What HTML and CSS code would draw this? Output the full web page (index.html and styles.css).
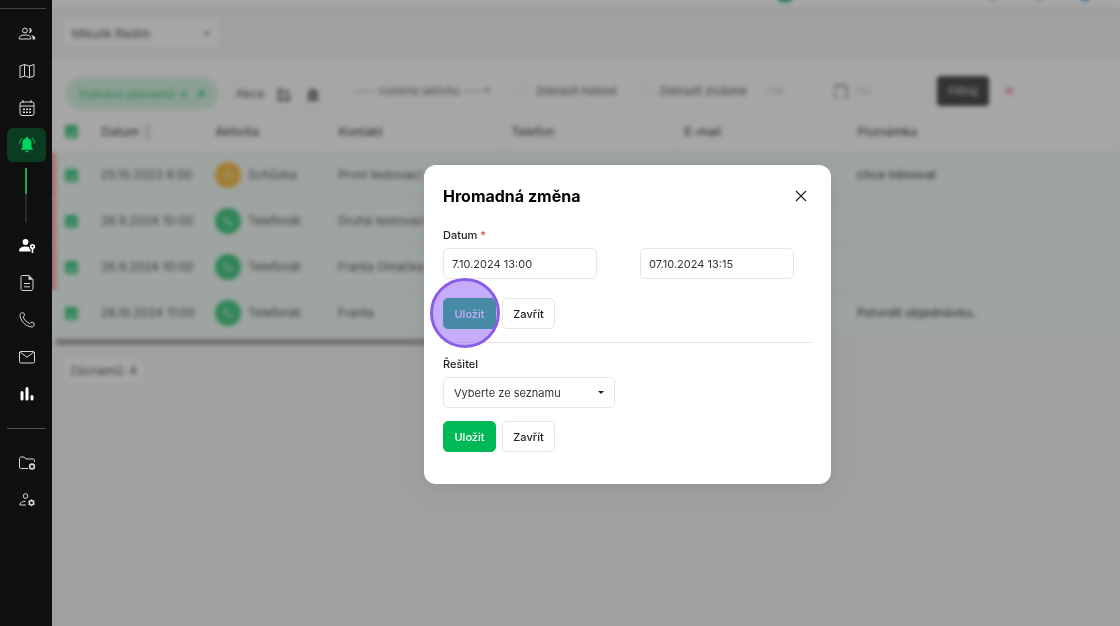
FILE: index.html
```html
<!DOCTYPE html>
<html lang="cs">
<head>
    <meta charset="UTF-8">
    <meta name="viewport" content="width=device-width, initial-scale=1.0">
    <title>Aktivity - Hromadná změna</title>
    <link rel="stylesheet" href="styles.css">
</head>
<body>
    <nav class="sidebar">
        <ul class="nav-list nav-top">
            <li><a href="#" aria-label="Kontakty">
                <svg viewBox="0 0 18 16"><circle cx="7" cy="4.5" r="2.4"/><path d="M1.2 13v-1.2c0-1.7 2.6-2.8 5.8-2.8s5.8 1.1 5.8 2.8V13z"/><path class="fill" d="M11 2c3.600-.4 3.600 5.400 0 5 1-1.600 1-3.400 0-5zM13.200 9c2.300.5 4 1.400 4 3v1.500h-2.600V12c0-1.200-.5-2.200-1.400-3z"/></svg>
            </a></li>
            <li><a href="#" aria-label="Mapa">
                <svg viewBox="0 0 18 16"><path d="M2 3l4.500-1.500 5 1.500L16 1.500V13l-4.500 1.500-5-1.500L2 14.500zM6.500 1.500V13M11.500 3v11.500"/></svg>
            </a></li>
            <li><a href="#" aria-label="Kalendář">
                <svg viewBox="0 0 18 16"><rect x="2" y="2" width="14" height="13.500" rx="2"/><path d="M5 0v3M13 0v3M2 6h14"/><path class="dots" d="M5 9.200h2M8 9.200h2M11 9.200h2M5 12.300h2M8 12.300h2M11 12.300h2"/></svg>
            </a></li>
            <li><a href="#" class="active" aria-label="Aktivity">
                <svg viewBox="0 0 18 16"><path class="fill" d="M9 0c.8 0 1.200.5 1.200 1.200C12.600 1.800 13.600 3.700 13.600 6v4.500l1.200 1.300v1H3.200v-1l1.200-1.300V6c0-2.300 1-4.200 3.400-4.800C7.800.5 8.200 0 9 0zM7.300 13.800h3.400c-.2 2.200-3.200 2.200-3.400 0z"/><path d="M1.500 6.500C1.500 4 2.500 2.200 4 1M16.500 6.500C16.500 4 15.500 2.200 14 1"/></svg>
            </a></li>
        </ul>
        <div class="nav-progress"></div>
        <ul class="nav-list">
            <li><a href="#" class="strong" aria-label="Uživatelé">
                <svg viewBox="0 0 18 16"><circle class="fill" cx="7.500" cy="4" r="2.900"/><path class="fill" d="M1.200 13.500V12c0-2.200 3-3.600 6.300-3.600 1.500 0 2.700.3 3.600.7 0 1.500.7 2.400 1.500 3v1.400z"/><circle class="key" cx="14.500" cy="8.500" r="1.800"/><path class="key" d="M14.500 10.500v4.500"/></svg>
            </a></li>
            <li><a href="#" aria-label="Dokumenty">
                <svg viewBox="0 0 18 16"><path d="M4.500.5h6.500l4 4v9c0 1.300-.7 2-2 2H5c-1.300 0-2-.7-2-2V2c0-1 .5-1.500 1.500-1.500zM6 8.500h6M6 11.800h6"/><path class="fill" d="M10.500.5v4.300H15z"/></svg>
            </a></li>
            <li><a href="#" aria-label="Hovory">
                <svg viewBox="0 0 18 16"><path d="M2 2.500C2 1.500 3 .8 4.500.8c1.300 0 2 .8 2 2 0 1-.6 1.600-1.400 2.200 1.500 3.300 3.500 5.200 6.700 6.600.6-.9 1.200-1.400 2.200-1.400 1.300 0 2.200.8 2.200 2 0 1.700-.9 2.800-2.400 2.800C7.500 14.500 2 8.800 2 2.500z"/></svg>
            </a></li>
            <li><a href="#" aria-label="E-maily">
                <svg viewBox="0 0 18 16"><rect x="1.500" y="2.500" width="15" height="11.500" rx="1.500"/><path d="M2 3l7 5.200L16 3"/></svg>
            </a></li>
            <li><a href="#" aria-label="Statistiky">
                <svg viewBox="0 0 18 16"><path class="bars" d="M4 6.500V13M9 2.500V13M14 10.500V13"/></svg>
            </a></li>
        </ul>
        <hr>
        <ul class="nav-list">
            <li><a href="#" aria-label="Nastavení složek">
                <svg viewBox="0 0 18 16"><path d="M10 13.500H3.200c-1 0-1.700-.6-1.700-1.500V3.500C1.500 2.600 2.200 2 3.200 2h3L8 4h7c1 0 1.500.6 1.500 1.500V7"/><circle class="gear" cx="14" cy="11.500" r="2.400"/></svg>
            </a></li>
            <li><a href="#" aria-label="Nastavení uživatelů">
                <svg viewBox="0 0 18 16"><circle cx="7.500" cy="4" r="2.300"/><path d="M8 13H2v-1c0-1.500 2.500-2.600 5.500-2.600"/><circle class="gear" cx="13.500" cy="10.800" r="2.200"/><path d="M13.500 7.300v1M13.500 13.300v1M10.500 9l1 .6M16.500 9l-1 .6M10.500 12.600l1-.6M16.500 12.600l-1-.6"/></svg>
            </a></li>
        </ul>
    </nav>

    <div class="content">
        <header class="topbar">
            <span class="avatar green"></span>
            <span class="avatar gray"></span>
            <span class="avatar gray"></span>
            <span class="avatar blue"></span>
        </header>
        <div class="user-bar">
            <select class="user-select" aria-label="Uživatel"><option>Mikulík Radim</option></select>
            <span class="caret"></span>
        </div>

        <main class="panel">
            <div class="filters">
                <button class="chip" type="button">Vybráno záznamů: 4 <b>×</b></button>
                <div class="actions">
                    <button type="button">Akce</button>
                    <button type="button" aria-label="Upravit"><svg viewBox="0 0 12 12"><path d="M6 1H1v10h10V6M5 7l6-6"/></svg></button>
                    <button type="button" aria-label="Smazat"><svg viewBox="0 0 12 12"><path d="M1 3h10M4 1h4M2 3v8h8V3M5 5v4M7 5v4"/></svg></button>
                </div>
                <div class="activity">
                    <select aria-label="Aktivita"><option>---- Vyberte aktivitu ----</option></select>
                    <span class="caret"></span>
                </div>
                <label class="toggle"><input type="checkbox"> Zobrazit hotové</label>
                <label class="toggle"><input type="checkbox"> Zobrazit zrušené</label>
                <div class="range">
                    <input type="text" placeholder="Od" aria-label="Od">
                    <svg viewBox="0 0 14 14"><path d="M1 5V2h12v11H9M1 8v5h3M4 0v3M10 0v3"/></svg>
                    <input type="text" placeholder="Do" aria-label="Do">
                </div>
                <button class="filter-btn" type="button">Filtruj</button>
                <button class="reset-btn" type="button">✕</button>
            </div>

            <table class="records">
                <colgroup>
                    <col class="c-check"><col class="c-date"><col class="c-activity"><col class="c-contact"><col class="c-phone"><col class="c-mail"><col>
                </colgroup>
                <thead>
                    <tr>
                        <th><input type="checkbox" checked aria-label="Vybrat vše"></th>
                        <th>Datum <span class="sort">↕</span></th>
                        <th>Aktivita</th>
                        <th>Kontakt</th>
                        <th>Telefon</th>
                        <th>E-mail</th>
                        <th>Poznámka</th>
                    </tr>
                </thead>
                <tbody>
                    <tr class="late">
                        <td><input type="checkbox" checked aria-label="Vybrat"></td>
                        <td>25.10.2023 8:00</td>
                        <td><span class="type"><i class="badge meeting"><svg viewBox="0 0 12 12"><circle cx="6" cy="6" r="4"/><path d="M6 4v2h2"/></svg></i>Schůzka</span></td>
                        <td>První testovací s</td>
                        <td></td>
                        <td></td>
                        <td class="note">chce trénovat</td>
                    </tr>
                    <tr class="late">
                        <td><input type="checkbox" checked aria-label="Vybrat"></td>
                        <td>26.9.2024 10:00</td>
                        <td><span class="type"><i class="badge"><svg viewBox="0 0 12 12"><path d="M2 2c0 5 3 8 8 8V8L8 7 7 8C5 7 5 6 4 5l1-1-1-2z"/></svg></i>Telefonát</span></td>
                        <td>Druhá testovací</td>
                        <td></td>
                        <td></td>
                        <td></td>
                    </tr>
                    <tr class="late">
                        <td><input type="checkbox" checked aria-label="Vybrat"></td>
                        <td>26.9.2024 10:00</td>
                        <td><span class="type"><i class="badge"><svg viewBox="0 0 12 12"><path d="M2 2c0 5 3 8 8 8V8L8 7 7 8C5 7 5 6 4 5l1-1-1-2z"/></svg></i>Telefonát</span></td>
                        <td>Franta Omáčka T</td>
                        <td></td>
                        <td></td>
                        <td></td>
                    </tr>
                    <tr>
                        <td><input type="checkbox" checked aria-label="Vybrat"></td>
                        <td>28.10.2024 11:00</td>
                        <td><span class="type"><i class="badge"><svg viewBox="0 0 12 12"><path d="M2 2c0 5 3 8 8 8V8L8 7 7 8C5 7 5 6 4 5l1-1-1-2z"/></svg></i>Telefonát</span></td>
                        <td>Franta</td>
                        <td></td>
                        <td></td>
                        <td class="note">Potvrdit objednávku.</td>
                    </tr>
                </tbody>
            </table>
        </main>
        <div class="scroll-thumb"></div>
        <div class="count">Záznamů: 4</div>
    </div>

    <div class="overlay">
        <section class="modal" role="dialog" aria-labelledby="modalTitle">
            <div class="modal-head">
                <h1 id="modalTitle">Hromadná změna</h1>
                <button class="close" type="button" aria-label="Zavřít okno">
                    <svg viewBox="0 0 12 12"><path d="M1 1l10 10M11 1L1 11"/></svg>
                </button>
            </div>

            <form class="group">
                <label class="field-label" for="dateFrom">Datum <span class="required">*</span></label>
                <div class="dates">
                    <input class="field" id="dateFrom" type="text" value="7.10.2024 13:00">
                    <input class="field" type="text" value="07.10.2024 13:15" aria-label="Datum do">
                </div>
                <div class="buttons date-buttons">
                    <button class="btn btn-save" type="button">Uložit</button>
                    <button class="btn" type="button">Zavřít</button>
                    <span class="click-mark"></span>
                </div>
            </form>

            <form class="group solver">
                <label class="field-label" for="solver">Řešitel</label>
                <div class="select-wrap">
                    <select class="field" id="solver"><option>Vyberte ze seznamu</option></select>
                    <span class="caret"></span>
                </div>
                <div class="buttons">
                    <button class="btn btn-save" type="button">Uložit</button>
                    <button class="btn" type="button">Zavřít</button>
                </div>
            </form>
        </section>
    </div>
</body>
</html>
```
FILE: styles.css
```css
:root {
    --green: #00b956;
    --dark: #101010;
    --page: #f2f2f2;
    --border: #e6e6e6;
    --text: #222222;
    --purple: #8a5de8;
}

* {
    margin: 0;
    padding: 0;
    box-sizing: border-box;
}

body {
    font-family: Inter, "Liberation Sans", sans-serif;
    font-size: 12px;
    line-height: 16px;
    color: var(--text);
    background: var(--page);
    min-height: 100vh;
    display: flex;
}

button, input, select {
    font: inherit;
    color: inherit;
}

select {
    appearance: none;
}

svg {
    fill: none;
    stroke: currentColor;
}

/* Sidebar */
.sidebar {
    width: 52px;
    flex-shrink: 0;
    background: var(--dark);
    color: #d8d8d8;
}

.nav-list {
    list-style: none;
}

.nav-top {
    margin-top: 8px;
    padding-top: 6px;
    border-top: 1px solid #444444;
    width: 46px;
}

.nav-list li {
    width: 52px;
    height: 37px;
    display: flex;
    align-items: center;
    justify-content: center;
}

.nav-list a {
    width: 39px;
    height: 34px;
    padding-left: 1px;
    border-radius: 6px;
    display: flex;
    align-items: center;
    justify-content: center;
    color: inherit;
}

.nav-list a.active {
    background: #0b3b20;
    color: #00d45f;
}

.nav-list a.strong {
    color: #ffffff;
}

.nav-list svg {
    width: 18px;
    height: 16px;
}

.nav-list .fill {
    fill: currentColor;
    stroke: none;
}

.nav-list .bars {
    stroke: #ffffff;
    stroke-width: 3;
    stroke-linecap: round;
}

.nav-list .dots,
.nav-list .key,
.nav-list .gear {
    stroke-width: 1.6;
}

.nav-progress {
    width: 2px;
    height: 55px;
    margin: 5px auto 4px;
    background: linear-gradient(#2f9e58 26px, #2a2a2a 26px);
}

.sidebar hr {
    width: 39px;
    margin: 16px auto 15px;
    border: 0;
    border-top: 1px solid #555555;
}

/* Page under the dialog */
.content {
    flex: 1;
    min-width: 0;
}

.topbar {
    height: 8px;
    background: #ffffff;
    box-shadow: 0 2px 3px rgba(0, 0, 0, 0.1);
    display: flex;
    justify-content: flex-end;
    align-items: flex-end;
    gap: 24px;
    padding: 0 24px 6px 0;
}

.avatar {
    width: 22px;
    height: 22px;
    border-radius: 50%;
    flex-shrink: 0;
}

.avatar.green {
    width: 26px;
    height: 26px;
    background: var(--green);
    margin: 0 160px -1px 0;
}

.avatar.gray {
    background: #dddddd;
}

.avatar.blue {
    background: #6aa5d8;
}

.user-bar {
    height: 52px;
    padding: 12px;
    position: relative;
}

.user-select,
.activity select {
    border: 0;
    border-radius: 4px;
    background: #ffffff;
}

.user-select {
    width: 155px;
    height: 27px;
    padding: 0 8px;
}

.caret {
    position: absolute;
    border: 3px solid transparent;
    border-top-color: currentColor;
    border-bottom: 0;
    pointer-events: none;
}

.user-bar .caret {
    left: 152px;
    top: 24px;
}

.panel {
    background: #fefefe;
}

.filters {
    height: 52px;
    padding: 16px 0 0 14px;
    display: flex;
    align-items: flex-start;
    font-size: 11px;
}

.chip {
    width: 152px;
    height: 31px;
    margin: 2px 12px 0 0;
    border: 0;
    border-radius: 15px;
    background: #c4f0d6;
    color: var(--green);
    font-weight: 500;
    white-space: nowrap;
}

.chip b {
    font-size: 14px;
    margin-left: 6px;
}

.actions {
    width: 98px;
    height: 32px;
    margin: 2px 18px 0 0;
    display: flex;
    border: 1px solid #f4f4f4;
    border-radius: 4px;
    font-size: 12px;
}

.actions button {
    flex: 1;
    border: 0;
    background: none;
}

.actions button:first-child {
    flex: 0 0 38px;
}

.actions svg {
    width: 12px;
    height: 12px;
    stroke-width: 2;
    vertical-align: middle;
}

.activity {
    position: relative;
    margin-right: 12px;
}

.activity select {
    width: 153px;
    height: 30px;
    padding-left: 8px;
    border: 1px solid #f4f4f4;
    color: #444444;
}

.activity .caret {
    right: 9px;
    top: 13px;
}

.toggle {
    height: 30px;
    width: 106px;
    margin-right: 12px;
    display: flex;
    align-items: center;
    justify-content: flex-end;
    gap: 8px;
    white-space: nowrap;
}

.toggle + .toggle {
    width: 118px;
}

.toggle input {
    appearance: none;
    width: 12px;
    height: 12px;
    border: 1px solid #eeeeee;
}

.range {
    width: 170px;
    height: 30px;
    margin-right: 8px;
    display: flex;
    align-items: center;
    border: 1px solid #f4f4f4;
    border-radius: 4px;
}

.range input {
    width: 74px;
    padding: 0 8px;
    border: 0;
    background: none;
}

.range input::placeholder {
    color: #bbbbbb;
}

.range svg {
    width: 14px;
    height: 14px;
    flex-shrink: 0;
}

.filter-btn {
    width: 52px;
    height: 30px;
    border: 0;
    border-radius: 4px;
    background: #060606;
    color: #dddddd;
}

.reset-btn {
    width: 26px;
    height: 30px;
    margin-left: 7px;
    border: 0;
    background: none;
    color: #f04060;
    font-weight: 700;
}

.records {
    width: 100%;
    table-layout: fixed;
    border-collapse: collapse;
}

.c-check { width: 40px; }
.c-date { width: 114px; }
.c-activity { width: 123px; }
.c-contact,
.c-phone,
.c-mail { width: 173px; }

.records th {
    height: 40px;
    padding: 0 9px;
    text-align: left;
    font-weight: 500;
    border-right: 1px solid #f4f4f4;
}

.records td {
    height: 46px;
    padding: 0 9px;
    white-space: nowrap;
    background: #eefaf4;
    border-top: 1px solid #e8f2ed;
}

.records th:first-child,
.records td:first-child {
    padding-left: 13px;
}

.late td:first-child {
    box-shadow: inset 4px 0 #ff8585;
}

.records .note {
    font-weight: 500;
}

.records input {
    appearance: none;
    width: 13px;
    height: 13px;
    border-radius: 3px;
    background: var(--green);
    display: flex;
    align-items: center;
    justify-content: center;
}

.records input::before {
    content: "";
    width: 7px;
    height: 4px;
    border: solid #ffffff;
    border-width: 0 0 1px 1px;
    transform: rotate(-45deg);
}

.sort {
    color: #aaaaaa;
}

.type {
    display: flex;
    align-items: center;
    gap: 7px;
}

.badge {
    width: 26px;
    height: 26px;
    border-radius: 50%;
    background: var(--green);
    color: #d8f5e4;
    display: flex;
    align-items: center;
    justify-content: center;
}

.badge.meeting {
    background: #f5a800;
}

.badge svg {
    width: 12px;
    height: 12px;
}

.scroll-thumb {
    width: 60%;
    height: 6px;
    margin: 3px 0 14px 3px;
    border-radius: 3px;
    background: #8a8a8a;
}

.count {
    display: inline-block;
    margin-left: 12px;
    padding: 4px 6px;
    border-radius: 4px;
    background: #ffffff;
}

/* Dialog */
.overlay {
    position: fixed;
    inset: 0 0 0 52px;
    padding: 23px 0 0 83px;
    display: flex;
    align-items: center;
    justify-content: center;
    background: rgba(90, 90, 90, 0.54);
    backdrop-filter: blur(2px);
}

.modal {
    width: 407px;
    padding: 19px 19px 32px;
    border-radius: 12px;
    background: #ffffff;
    box-shadow: 0 4px 24px rgba(0, 0, 0, 0.08);
    font-size: 11px;
}

.modal-head {
    height: 24px;
    margin-bottom: 19px;
    display: flex;
    align-items: center;
    justify-content: space-between;
}

.modal h1 {
    font-size: 16px;
    line-height: 24px;
    font-weight: 700;
    color: #000000;
}

.close {
    width: 22px;
    height: 22px;
    border: 0;
    background: none;
    display: flex;
    align-items: center;
    justify-content: center;
}

.close svg {
    width: 12px;
    height: 12px;
    stroke-width: 1.2;
}

.field-label {
    display: block;
    margin-bottom: 5px;
    font-weight: 500;
    color: #222222;
}

.required {
    color: #d9482b;
}

.dates {
    display: flex;
    gap: 43px;
}

.field {
    height: 31px;
    width: 154px;
    padding: 0 8px;
    border: 1px solid var(--border);
    border-radius: 5px;
    background: #ffffff;
    color: #333333;
}

.buttons {
    display: flex;
    gap: 6px;
    margin-top: 13px;
}

.date-buttons {
    position: relative;
    margin-top: 19px;
}

.btn {
    min-width: 53px;
    height: 31px;
    padding: 0 9px;
    border: 1px solid var(--border);
    border-radius: 5px;
    background: #ffffff;
    font-weight: 500;
}

.btn-save {
    border-color: var(--green);
    background: var(--green);
    color: #ffffff;
}

.click-mark {
    position: absolute;
    left: -13px;
    top: -20px;
    width: 70px;
    height: 70px;
    border: 3px solid var(--purple);
    border-radius: 50%;
    background: rgba(139, 92, 246, 0.5);
    pointer-events: none;
}

.solver {
    margin-top: 13px;
    padding-top: 13px;
    border-top: 1px solid var(--border);
}

.select-wrap {
    position: relative;
    width: 172px;
}

.select-wrap .field {
    width: 100%;
    padding: 0 10px;
}

.select-wrap .caret {
    right: 11px;
    top: 14px;
    color: #222222;
}
```
